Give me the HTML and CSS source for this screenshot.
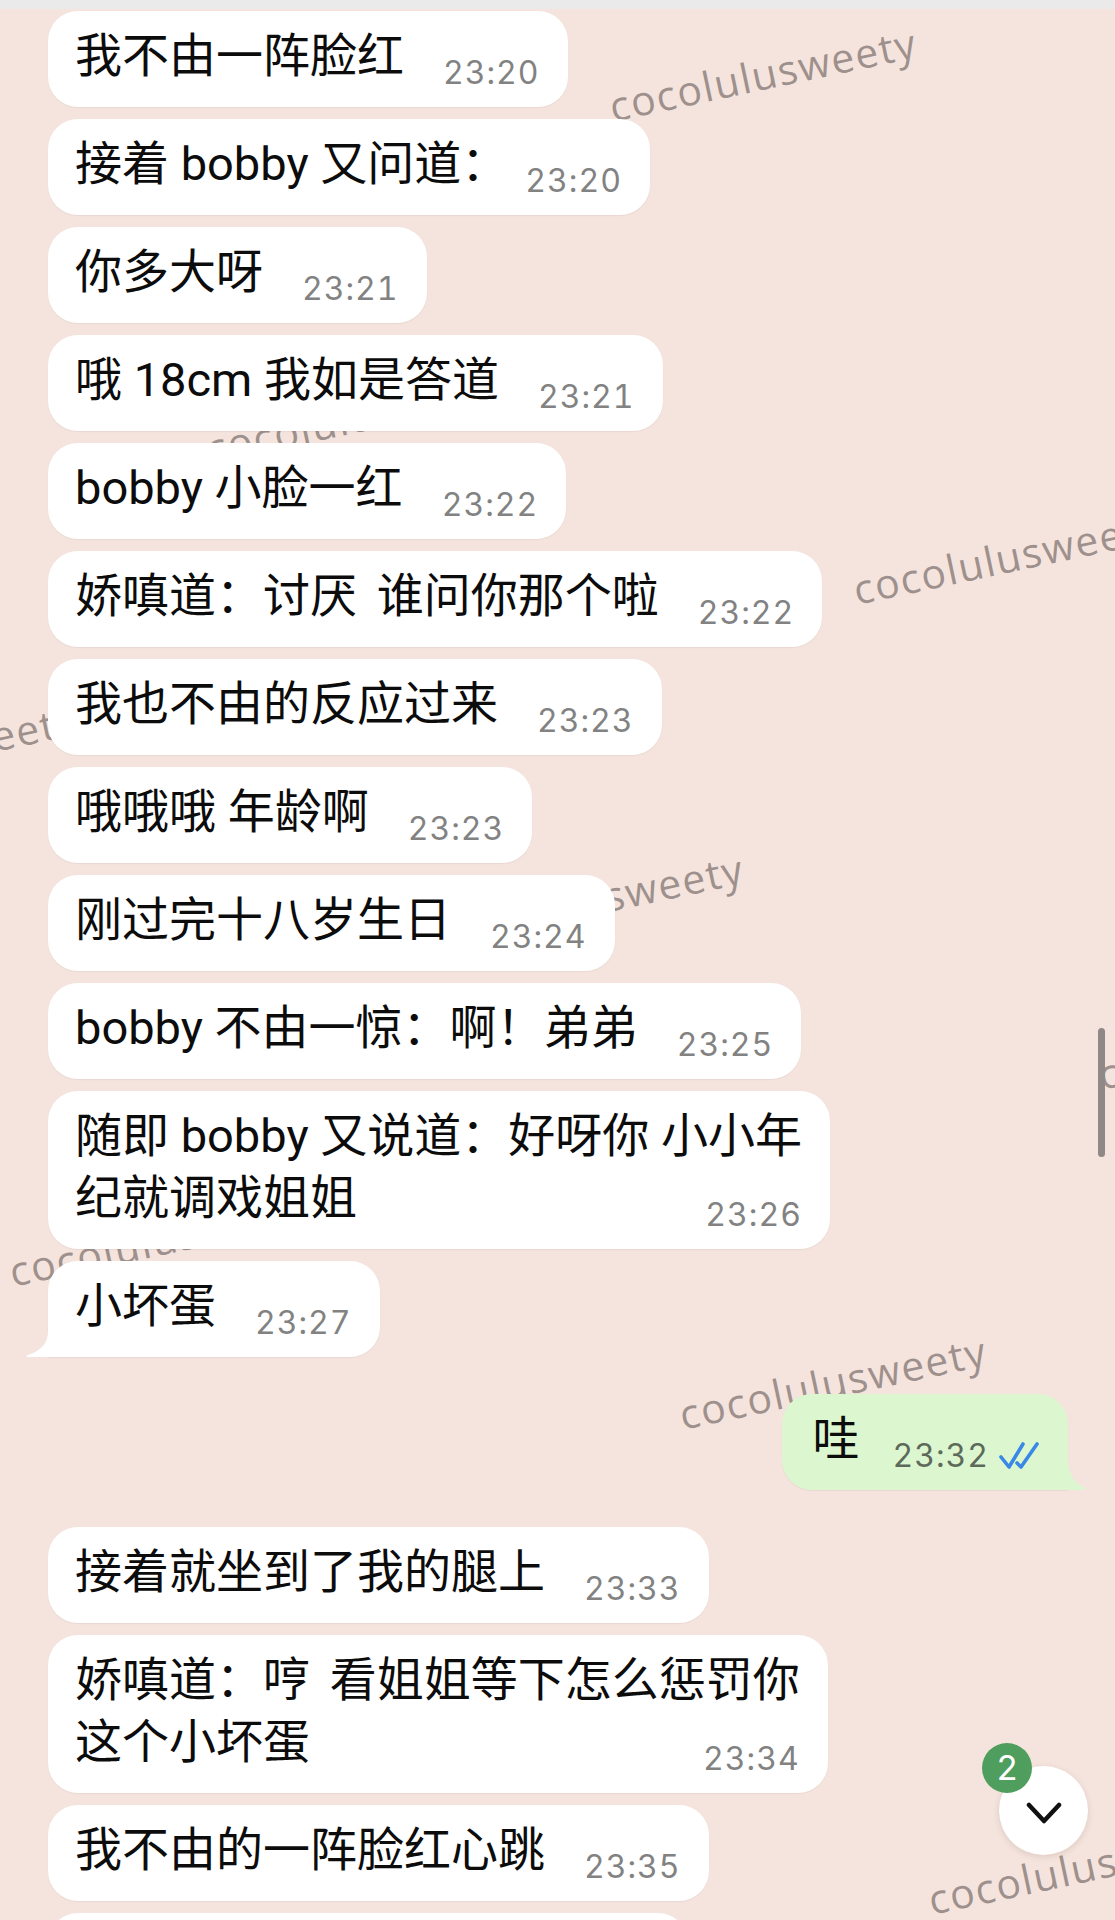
FILE: index.html
```html
<!DOCTYPE html>
<html lang="zh-CN">
<head>
<meta charset="utf-8">
<title>Chat</title>
<link rel="stylesheet" href="styles.css">
</head>
<body>
<div class="screen">
  <div class="topbar"></div>

  <div class="watermarks" aria-hidden="true">
    <span class="wm wm1">cocolulusweety</span>
    <span class="wm wm2">cocolulusweety</span>
    <span class="wm wm3">cocolulusweety</span>
    <span class="wm wm4">cocolulusweety</span>
    <span class="wm wm5">cocolulusweety</span>
    <span class="wm wm6">cocolulusweety</span>
    <span class="wm wm7">cocolulusweety</span>
    <span class="wm wm8">cocolulusweety</span>
    <span class="wm wm9">cocolulusweety</span>
  </div>

  <div class="chat">
    <div class="msg"><span class="txt">我不由一阵脸红</span><span class="time">23:20</span></div>
    <div class="msg"><span class="txt">接着 bobby 又问道<span class="trim">：</span></span><span class="time">23:20</span></div>
    <div class="msg"><span class="txt">你多大呀</span><span class="time">23:21</span></div>
    <div class="msg"><span class="txt">哦 18cm 我如是答道</span><span class="time">23:21</span></div>
    <div class="msg"><span class="txt">bobby 小脸一红</span><span class="time">23:22</span></div>
    <div class="msg"><span class="txt">娇嗔道：讨厌<span class="wide"> </span>谁问你那个啦</span><span class="time">23:22</span></div>
    <div class="msg"><span class="txt">我也不由的反应过来</span><span class="time">23:23</span></div>
    <div class="msg"><span class="txt">哦哦哦 年龄啊</span><span class="time">23:23</span></div>
    <div class="msg"><span class="txt">刚过完十八岁生日</span><span class="time">23:24</span></div>
    <div class="msg"><span class="txt">bobby 不由一惊：啊！弟弟</span><span class="time">23:25</span></div>
    <div class="msg"><span class="txt">随即 bobby 又说道：好呀你 小小年<br>纪就调戏姐姐</span><span class="time">23:26</span></div>
    <div class="msg tail-in"><span class="txt">小坏蛋</span><span class="time">23:27</span>
      <svg class="tail tail-l" width="28" height="26" viewBox="0 0 28 26"><path d="M28,0 L24,0 C24,11 19,19 4,24 Q0,26 5,26 L28,26 Z" fill="#ffffff"/></svg>
    </div>

    <div class="msg out"><span class="txt">哇</span><span class="time">23:32<svg class="ticks" width="44" height="30" viewBox="0 0 44 30"><path d="M3,17 L11,27 L25,4" fill="none" stroke="#3a88e6" stroke-width="3.6" stroke-linecap="round" stroke-linejoin="round"/><path d="M19,23 L23,27 L39,4" fill="none" stroke="#3a88e6" stroke-width="3.6" stroke-linecap="round" stroke-linejoin="round"/></svg></span>
      <svg class="tail tail-r" width="24" height="34" viewBox="0 0 24 34"><path d="M0,0 L4,0 C4,16 9,27 20,31 Q24,33 19,34 L0,34 Z" fill="#dcf7cf"/></svg>
    </div>

    <div class="msg after-out"><span class="txt">接着就坐到了我的腿上</span><span class="time">23:33</span></div>
    <div class="msg"><span class="txt">娇嗔道：哼<span class="wide"> </span>看姐姐等下怎么惩罚你<br>这个小坏蛋</span><span class="time">23:34</span></div>
    <div class="msg"><span class="txt">我不由的一阵脸红心跳</span><span class="time">23:35</span></div>
    <div class="msg stub"></div>
  </div>

  <div class="scrollbar"></div>

  <div class="jump">
    <svg width="36" height="24" viewBox="0 0 36 24"><polyline points="3,4 18,20 33,4" fill="none" stroke="#111" stroke-width="4.5" stroke-linecap="round" stroke-linejoin="round"/></svg>
    <span class="badge">2</span>
  </div>
</div>
</body>
</html>
```

FILE: styles.css
```css
* { box-sizing: border-box; }

html, body {
  margin: 0;
  padding: 0;
}

body {
  width: 1115px;
  height: 1920px;
  overflow: hidden;
  background: #f4e4dd;
  font-family: "Roboto", "Noto Sans CJK SC", sans-serif;
}

.screen {
  position: relative;
  width: 1115px;
  height: 1920px;
  overflow: hidden;
  background: #f4e4dd;
}

.topbar {
  height: 9px;
  background: #ebeaea;
}

/* watermark layer */
.watermarks {
  position: absolute;
  inset: 0;
  z-index: 0;
  pointer-events: none;
}

.wm {
  position: absolute;
  font-family: "Open Sans", "DejaVu Sans", sans-serif;
  font-size: 41px;
  line-height: 41px;
  letter-spacing: 1.5px;
  color: rgba(100, 88, 86, 0.6);
  white-space: nowrap;
  transform-origin: 0 36px;
  transform: rotate(-12deg);
}

.wm1 { left: 613px; top: 86px; }
.wm2 { left: 857px; top: 569px; }
.wm3 { left: 440px; top: 912px; }
.wm4 { left: -226px; top: 763px; }
.wm5 { left: 1102px; top: 1054px; }
.wm6 { left: 13px; top: 1251px; }
.wm7 { left: 683px; top: 1394px; }
.wm8 { left: 932px; top: 1879px; }
.wm9 { left: 210px; top: 428px; }

/* chat column */
.chat {
  position: relative;
  z-index: 1;
  display: flex;
  flex-direction: column;
  align-items: flex-start;
  gap: 12px;
  padding: 2px 47px 0 48px;
}

.msg {
  position: relative;
  display: flow-root;
  background: #ffffff;
  border-radius: 30px;
  padding: 14px 28px 20px 27px;
  font-size: 47px;
  line-height: 62px;
  color: #0c0c0c;
  box-shadow: 0 1px 1px rgba(120, 90, 80, 0.08);
}

.trim {
  margin-right: -22px;
}

.wide {
  word-spacing: 8px;
}

.time {
  float: right;
  margin: 35px 0 0 39px;
  font-family: "Inter", sans-serif;
  font-size: 32px;
  line-height: 26px;
  letter-spacing: 1px;
  font-variant-numeric: tabular-nums;
  color: #828282;
  white-space: nowrap;
}

.stub {
  width: 640px;
  height: 96px;
}

.out {
  align-self: flex-end;
  margin-top: 25px;
  background: #dcf7cf;
  padding-left: 30px;
  padding-right: 26px;
  border-bottom-right-radius: 0;
}

.out .time {
  color: #5d6a5b;
  margin-left: 33px;
}

.ticks {
  display: inline-block;
  vertical-align: -3px;
  margin: -8px 0 0 9px;
}

.after-out {
  margin-top: 25px;
}

.tail-in {
  border-bottom-left-radius: 0;
}

.tail {
  position: absolute;
  bottom: 0;
}

.tail-l { left: -24px; }
.tail-r { right: -20px; }

/* scrollbar */
.scrollbar {
  position: absolute;
  left: 1098px;
  top: 1028px;
  width: 7px;
  height: 129px;
  border-radius: 4px;
  background: #8e8886;
  z-index: 2;
}

/* jump-to-bottom button */
.jump {
  position: absolute;
  left: 999px;
  top: 1766px;
  width: 89px;
  height: 89px;
  border-radius: 50%;
  background: #ffffff;
  box-shadow: 0 2px 6px rgba(120, 90, 80, 0.18);
  display: flex;
  align-items: center;
  justify-content: center;
  z-index: 3;
}

.jump svg {
  margin-top: 4px;
}

.badge {
  position: absolute;
  left: -17px;
  top: -23px;
  width: 50px;
  height: 50px;
  border-radius: 50%;
  background: #4f9e5d;
  color: #ffffff;
  font-family: "Inter", sans-serif;
  font-size: 34px;
  line-height: 50px;
  text-align: center;
}
```
